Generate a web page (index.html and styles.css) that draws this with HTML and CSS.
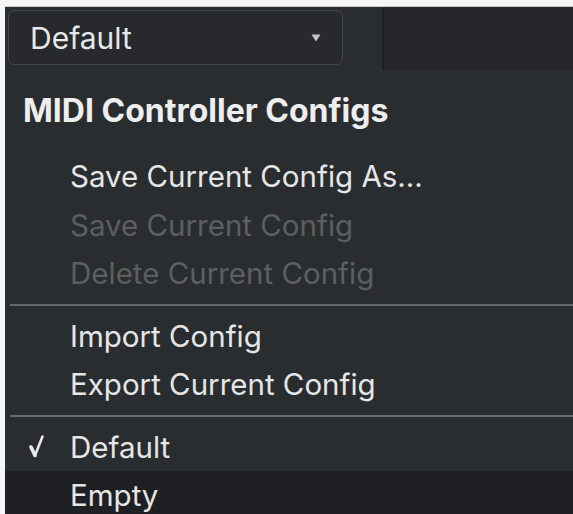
FILE: index.html
```html
<!DOCTYPE html>
<html>
<head>
<meta charset="utf-8">
<link rel="stylesheet" href="styles.css">
</head>
<body>
<div class="app">
  <div class="toolbar">
    <div class="select">
      <span class="select-label">Default</span>
      <svg class="caret" width="10" height="8" viewBox="0 0 10 8"><path d="M0.5 0.5 H9.5 L5 7.5 Z" fill="#c2c4c6"/></svg>
    </div>
    <div class="toolbar-fill"></div>
  </div>
  <div class="menu">
    <div class="menu-title">MIDI Controller Configs</div>
    <div class="item">Save Current Config As...</div>
    <div class="item disabled">Save Current Config</div>
    <div class="item disabled">Delete Current Config</div>
    <div class="sep"></div>
    <div class="item">Import Config</div>
    <div class="item">Export Current Config</div>
    <div class="sep"></div>
    <div class="item checked">
      <svg class="check" width="16" height="24" viewBox="0 0 16 24"><path d="M2 13 L6 21.5" fill="none" stroke="#e8e8e8" stroke-width="3.6" stroke-linecap="round"/><path d="M6 21.5 L13.5 2.5" fill="none" stroke="#e8e8e8" stroke-width="2.6" stroke-linecap="round"/></svg>
      Default
    </div>
    <div class="item hover">Empty</div>
  </div>
</div>
</body>
</html>
```
FILE: styles.css
```css
html, body {
  margin: 0;
  padding: 0;
}
body {
  background: #f6f6f6;
  width: 573px;
  height: 514px;
  overflow: hidden;
  font-family: Inter, "Noto Sans", sans-serif;
}
.app {
  margin: 6px 0 0 5px;
  height: 508px;
  background: #2a2d30;
  color: #e6e6e6;
  border-top: 1px solid #c9c9c9;
  box-sizing: border-box;
}
.toolbar {
  display: flex;
  height: 63px;
}
.select {
  margin: 3px 0 0 3px;
  width: 335px;
  height: 55px;
  box-sizing: border-box;
  border: 1px solid #45484b;
  border-radius: 7px;
  background: #27292c;
  display: flex;
  align-items: center;
  justify-content: space-between;
  padding: 0 21px 0 21px;
  font-size: 30px;
  color: #e8e8e8;
}
.caret {
  display: block;
}
.toolbar-fill {
  margin-left: 39px;
  flex: 1;
  background: #25272a;
  border-left: 2px solid #1e2022;
}
.menu-title {
  font-weight: 700;
  font-size: 32px;
  line-height: 40px;
  padding: 21px 0 21px 18px;
  color: #eeeeee;
}
.item {
  height: 48.5px;
  line-height: 48.5px;
  padding-left: 65px;
  font-size: 29.5px;
  color: #e6e6e6;
  position: relative;
  white-space: nowrap;
}
.item.disabled {
  color: #5c5f62;
}
.item.hover {
  background: #1f2023;
}
.check {
  position: absolute;
  left: 24px;
  top: 11px;
}
.sep {
  height: 2px;
  margin: 6px 0 6px 5px;
  background: #66696c;
}
```
